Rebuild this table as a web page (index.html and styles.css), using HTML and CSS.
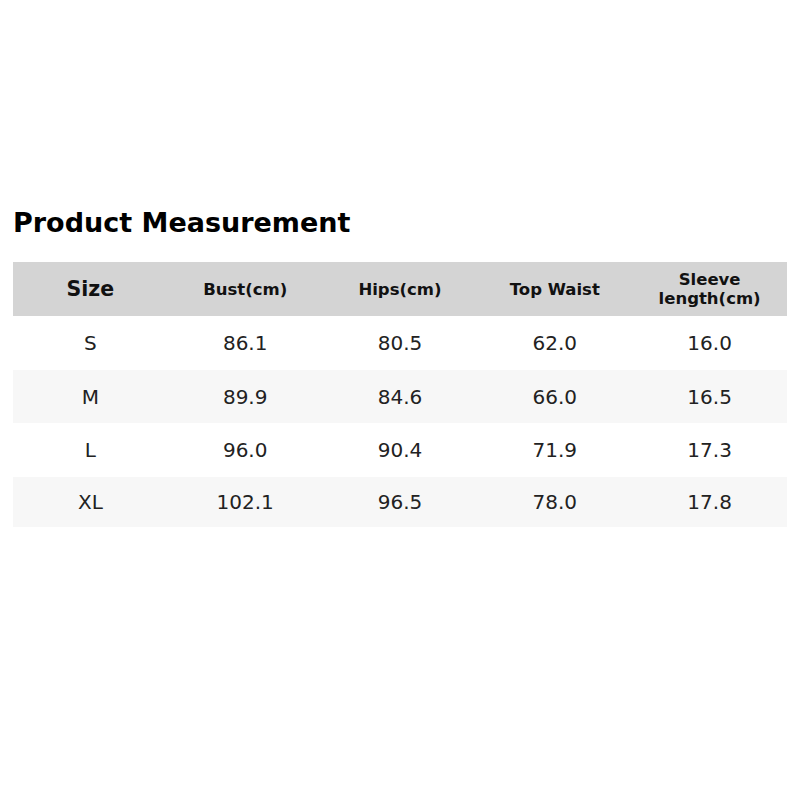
FILE: index.html
```html
<!DOCTYPE html>
<html>
<head>
<meta charset="utf-8">
<link rel="stylesheet" href="styles.css">
</head>
<body>
<div class="page">
  <h1 class="title">Product Measurement</h1>
  <table class="chart">
    <thead>
      <tr>
        <th class="size-head">Size</th>
        <th>Bust(cm)</th>
        <th>Hips(cm)</th>
        <th>Top Waist</th>
        <th>Sleeve<br>length(cm)</th>
      </tr>
    </thead>
    <tbody>
      <tr><td>S</td><td>86.1</td><td>80.5</td><td>62.0</td><td>16.0</td></tr>
      <tr class="alt"><td>M</td><td>89.9</td><td>84.6</td><td>66.0</td><td>16.5</td></tr>
      <tr><td>L</td><td>96.0</td><td>90.4</td><td>71.9</td><td>17.3</td></tr>
      <tr class="alt"><td>XL</td><td>102.1</td><td>96.5</td><td>78.0</td><td>17.8</td></tr>
    </tbody>
  </table>
</div>
</body>
</html>
```

FILE: styles.css
```css
html, body {
  margin: 0;
  padding: 0;
  background: #ffffff;
}
body {
  font-family: "DejaVu Sans", sans-serif;
  color: #111;
}
.page {
  padding: 207px 13px 0 13px;
}
.title {
  margin: 0 0 23px 0;
  font-size: 27px;
  font-weight: bold;
  line-height: 32px;
  color: #000;
}
.chart {
  width: 774px;
  border-collapse: collapse;
  table-layout: fixed;
}
.chart th {
  background: #d4d4d4;
  height: 54px;
  padding: 0;
  font-size: 16.5px;
  font-weight: bold;
  line-height: 19px;
  color: #111;
  text-align: center;
}
.chart th.size-head {
  font-size: 20.5px;
}
.chart td {
  height: 54px;
  padding: 0;
  font-size: 20px;
  color: #222;
  text-align: center;
}
.chart tr.alt td {
  background: #f7f7f7;
}
.chart tbody tr:nth-child(2) td {
  height: 53px;
}
.chart tbody tr:last-child td {
  height: 50px;
}
```
